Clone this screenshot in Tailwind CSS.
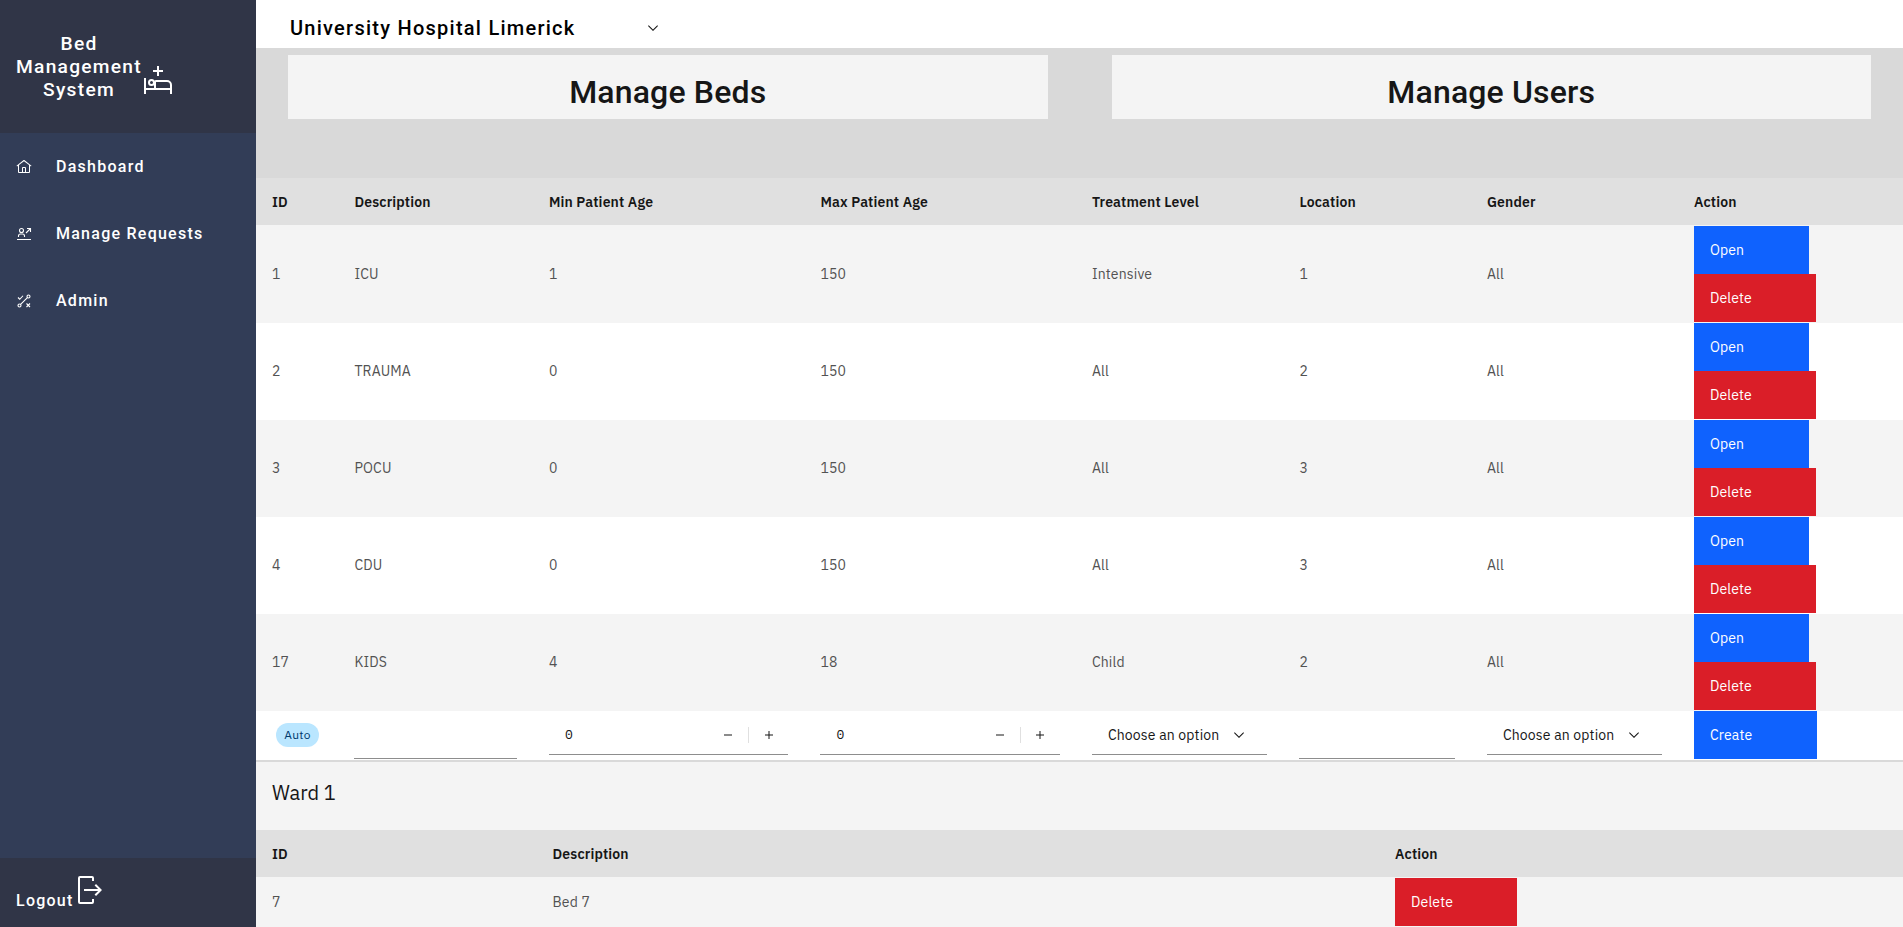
<!DOCTYPE html>
<html lang="en">
<head>
<meta charset="utf-8">
<title>Bed Management System</title>
<script src="https://cdn.jsdelivr.net/npm/@tailwindcss/browser@4"></script>
</head>
<body class="flex h-[927px] overflow-hidden bg-[#d9d9d9] text-[14px] leading-[18px] tracking-[0.16px] text-[#161616] font-['IBM_Plex_Sans','Noto_Sans',sans-serif]">

<svg class="hidden">
  <symbol id="chevron" viewBox="0 0 16 16"><path d="M8 11L3 6 3.7 5.3 8 9.6 12.3 5.3 13 6z"/></symbol>
  <symbol id="minus" viewBox="0 0 32 32"><path d="M8 15H24V17H8z"/></symbol>
  <symbol id="plus" viewBox="0 0 32 32"><path d="M17 15V8H15V15H8V17H15V24H17V17H24V15z"/></symbol>
</svg>

<aside class="flex w-[256px] shrink-0 flex-col bg-[#323d57] text-white font-['Roboto',sans-serif] font-medium tracking-[1.25px]">
  <div class="flex h-[133px] items-start bg-[#303547] px-4 pt-[32px]">
    <h1 class="w-[126px] text-center text-[19.2px] leading-[23.2px]">Bed Management System</h1>
    <svg class="mt-[32px] size-8 shrink-0" viewBox="0 0 32 32" fill="currentColor"><path d="M25,16H14a2,2,0,0,0-2,2v6H4V14H2V30H4V26H28v4h2V21A5.0059,5.0059,0,0,0,25,16Zm3,8H14V18H25a3.0033,3.0033,0,0,1,3,3Z"/><path d="M9.5,17A1.5,1.5,0,1,1,8,18.5,1.5,1.5,0,0,1,9.5,17m0-2A3.5,3.5,0,1,0,13,18.5,3.5,3.5,0,0,0,9.5,15Z"/><path d="M21 6H17V2H15V6H11V8H15V12H17V8H21z"/></svg>
  </div>
  <nav class="flex flex-1 flex-col text-[16px] leading-[19px]">
    <a class="flex h-[67px] items-center gap-6 px-4"><svg class="size-4" viewBox="0 0 32 32" fill="currentColor"><path d="M16.6123,2.2138a1.01,1.01,0,0,0-1.2427,0L1,13.4194l1.2427,1.5717L4,13.6209V26a2.0041,2.0041,0,0,0,2,2H26a2.0037,2.0037,0,0,0,2-2V13.63L29.7573,15,31,13.4282ZM18,26H14V18h4Zm2,0V18a2.0023,2.0023,0,0,0-2-2H14a2.002,2.002,0,0,0-2,2v8H6V12.0615l10-7.79,10,7.8005V26Z"/></svg>Dashboard</a>
    <a class="flex h-[67px] items-center gap-6 px-4"><svg class="size-4" viewBox="0 0 32 32" fill="none" stroke="currentColor" stroke-width="2.2"><circle cx="11" cy="9" r="4"/><path d="M5 22V20a4 4 0 0 1 4-4h4a4 4 0 0 1 4 4v2M2 27H30M22 5H29V12M29 5L20 14"/></svg>Manage Requests</a>
    <a class="flex h-[67px] items-center gap-6 px-4"><svg class="size-4" viewBox="0 0 32 32" fill="none" stroke="currentColor" stroke-width="2.2"><circle cx="25" cy="7" r="3"/><circle cx="7" cy="25" r="3"/><path d="M9.2 22.8L22.8 9.2M4 9L7.5 12.5L14 5.5M21 21L28 28M28 21L21 28"/></svg>Admin</a>
  </nav>
  <div class="flex h-[69px] items-start bg-[#303547] pl-4 pt-[16px]">
    <span class="mt-[17px] w-[58px] text-[16px] leading-[19px]">Logout</span>
    <svg class="size-8" viewBox="0 0 32 32" fill="currentColor"><path d="M6,30H18a2.0023,2.0023,0,0,0,2-2V25H18v3H6V4H18V7h2V4a2.0023,2.0023,0,0,0-2-2H6A2.0023,2.0023,0,0,0,4,4V28A2.0023,2.0023,0,0,0,6,30Z"/><path d="M20.586 20.586L24.172 17H10V15H24.172L20.586 11.414 22 10 28 16 22 22z"/></svg>
  </div>
</aside>

<main class="flex w-[1647px] flex-col">
  <header class="flex h-12 shrink-0 items-center bg-white pl-[34px] pt-[7px]">
    <span class="w-[355px] text-[20px] leading-[24px] font-medium tracking-[1.25px] text-black font-['Roboto',sans-serif]">University Hospital Limerick</span>
    <svg class="size-4" fill="#161616"><use href="#chevron"/></svg>
  </header>

  <section class="flex h-[130px] shrink-0 items-start gap-16 px-8 pt-[7px] text-[32px] leading-[40px] font-medium font-['Roboto',sans-serif]">
    <div class="h-16 flex-1 bg-[#f4f4f4] pt-[17px] text-center">Manage Beds</div>
    <div class="h-16 flex-1 bg-[#f4f4f4] pt-[17px] text-center">Manage Users</div>
  </section>

  <section class="flex shrink-0 flex-col text-[#525252]" id="wards">
    <div class="grid h-[47px] grid-cols-[82.4px_194.5px_271.5px_271.5px_207.5px_187.5px_207px_1fr] items-center bg-[#e0e0e0] font-semibold text-[#161616] *:pl-4">
      <div>ID</div><div>Description</div><div>Min Patient Age</div><div>Max Patient Age</div><div>Treatment Level</div><div>Location</div><div>Gender</div><div>Action</div>
    </div>
    <div class="grid h-[98px] grid-cols-[82.4px_194.5px_271.5px_271.5px_207.5px_187.5px_207px_1fr] items-center bg-[#f4f4f4] *:pl-4">
      <div>1</div><div>ICU</div><div>1</div><div>150</div><div>Intensive</div><div>1</div><div>All</div>
      <div class="text-white"><div class="flex h-12 w-[115px] items-center bg-[#0f62fe] pl-4">Open</div><div class="flex h-12 w-[122px] items-center bg-[#da1e28] pl-4">Delete</div></div>
    </div>
    <div class="grid h-[97px] grid-cols-[82.4px_194.5px_271.5px_271.5px_207.5px_187.5px_207px_1fr] items-center bg-white pb-px *:pl-4">
      <div>2</div><div>TRAUMA</div><div>0</div><div>150</div><div>All</div><div>2</div><div>All</div>
      <div class="text-white"><div class="flex h-12 w-[115px] items-center bg-[#0f62fe] pl-4">Open</div><div class="flex h-12 w-[122px] items-center bg-[#da1e28] pl-4">Delete</div></div>
    </div>
    <div class="grid h-[97px] grid-cols-[82.4px_194.5px_271.5px_271.5px_207.5px_187.5px_207px_1fr] items-center bg-[#f4f4f4] pb-px *:pl-4">
      <div>3</div><div>POCU</div><div>0</div><div>150</div><div>All</div><div>3</div><div>All</div>
      <div class="text-white"><div class="flex h-12 w-[115px] items-center bg-[#0f62fe] pl-4">Open</div><div class="flex h-12 w-[122px] items-center bg-[#da1e28] pl-4">Delete</div></div>
    </div>
    <div class="grid h-[97px] grid-cols-[82.4px_194.5px_271.5px_271.5px_207.5px_187.5px_207px_1fr] items-center bg-white pb-px *:pl-4">
      <div>4</div><div>CDU</div><div>0</div><div>150</div><div>All</div><div>3</div><div>All</div>
      <div class="text-white"><div class="flex h-12 w-[115px] items-center bg-[#0f62fe] pl-4">Open</div><div class="flex h-12 w-[122px] items-center bg-[#da1e28] pl-4">Delete</div></div>
    </div>
    <div class="grid h-[97px] grid-cols-[82.4px_194.5px_271.5px_271.5px_207.5px_187.5px_207px_1fr] items-center bg-[#f4f4f4] pb-px *:pl-4">
      <div>17</div><div>KIDS</div><div>4</div><div>18</div><div>Child</div><div>2</div><div>All</div>
      <div class="text-white"><div class="flex h-12 w-[115px] items-center bg-[#0f62fe] pl-4">Open</div><div class="flex h-12 w-[122px] items-center bg-[#da1e28] pl-4">Delete</div></div>
    </div>
    <div class="grid h-[49px] grid-cols-[82.4px_194.5px_271.5px_271.5px_207.5px_187.5px_207px_1fr] items-start bg-white text-[#161616] *:pl-4">
      <div class="pt-3"><span class="ml-1 flex h-6 w-[43px] items-center justify-center rounded-full bg-[#bae6ff] text-[12px] tracking-[0.32px] text-[#003a6d]">Auto</span></div>
      <div class="pr-4"><div class="h-12 border-b border-[#8d8d8d]"></div></div>
      <div class="pr-4"><div class="mt-1 flex h-10 items-center border-b border-[#8d8d8d]"><span class="flex-1 pl-4 font-['IBM_Plex_Mono','Liberation_Mono',monospace] text-[13px] tracking-[0.32px]">0</span><span class="flex w-10 justify-center"><svg class="size-4" fill="#161616"><use href="#minus"/></svg></span><span class="h-4 w-px bg-[#e0e0e0]"></span><span class="flex w-[39px] justify-center"><svg class="size-4" fill="#161616"><use href="#plus"/></svg></span></div></div>
      <div class="pr-4"><div class="mt-1 flex h-10 items-center border-b border-[#8d8d8d]"><span class="flex-1 pl-4 font-['IBM_Plex_Mono','Liberation_Mono',monospace] text-[13px] tracking-[0.32px]">0</span><span class="flex w-10 justify-center"><svg class="size-4" fill="#161616"><use href="#minus"/></svg></span><span class="h-4 w-px bg-[#e0e0e0]"></span><span class="flex w-[39px] justify-center"><svg class="size-4" fill="#161616"><use href="#plus"/></svg></span></div></div>
      <div class="pr-4"><div class="mt-1 flex h-10 items-center justify-between border-b border-[#8d8d8d] pl-4 pr-5">Choose an option<svg class="size-4" fill="#161616"><use href="#chevron"/></svg></div></div>
      <div class="pr-4"><div class="h-12 border-b border-[#8d8d8d]"></div></div>
      <div class="pr-4"><div class="mt-1 flex h-10 items-center justify-between border-b border-[#8d8d8d] pl-4 pr-5">Choose an option<svg class="size-4" fill="#161616"><use href="#chevron"/></svg></div></div>
      <div class="text-white"><div class="flex h-12 w-[123px] items-center bg-[#0f62fe] pl-4">Create</div></div>
    </div>
  </section>

  <section class="mt-[2px] flex shrink-0 flex-col bg-[#f4f4f4] text-[#525252]">
    <h2 class="h-[68px] pl-4 pt-[17px] text-[20px] leading-[28px] tracking-normal text-[#161616]">Ward 1</h2>
    <div class="grid h-[47px] grid-cols-[280.5px_842.5px_1fr] items-center bg-[#e0e0e0] font-semibold text-[#161616] *:pl-4">
      <div>ID</div><div>Description</div><div>Action</div>
    </div>
    <div class="grid h-[50px] grid-cols-[280.5px_842.5px_1fr] items-center *:pl-4">
      <div>7</div><div>Bed 7</div><div><div class="flex h-12 w-[122px] items-center bg-[#da1e28] pl-4 text-white">Delete</div></div>
    </div>
  </section>
</main>
</body>
</html>
